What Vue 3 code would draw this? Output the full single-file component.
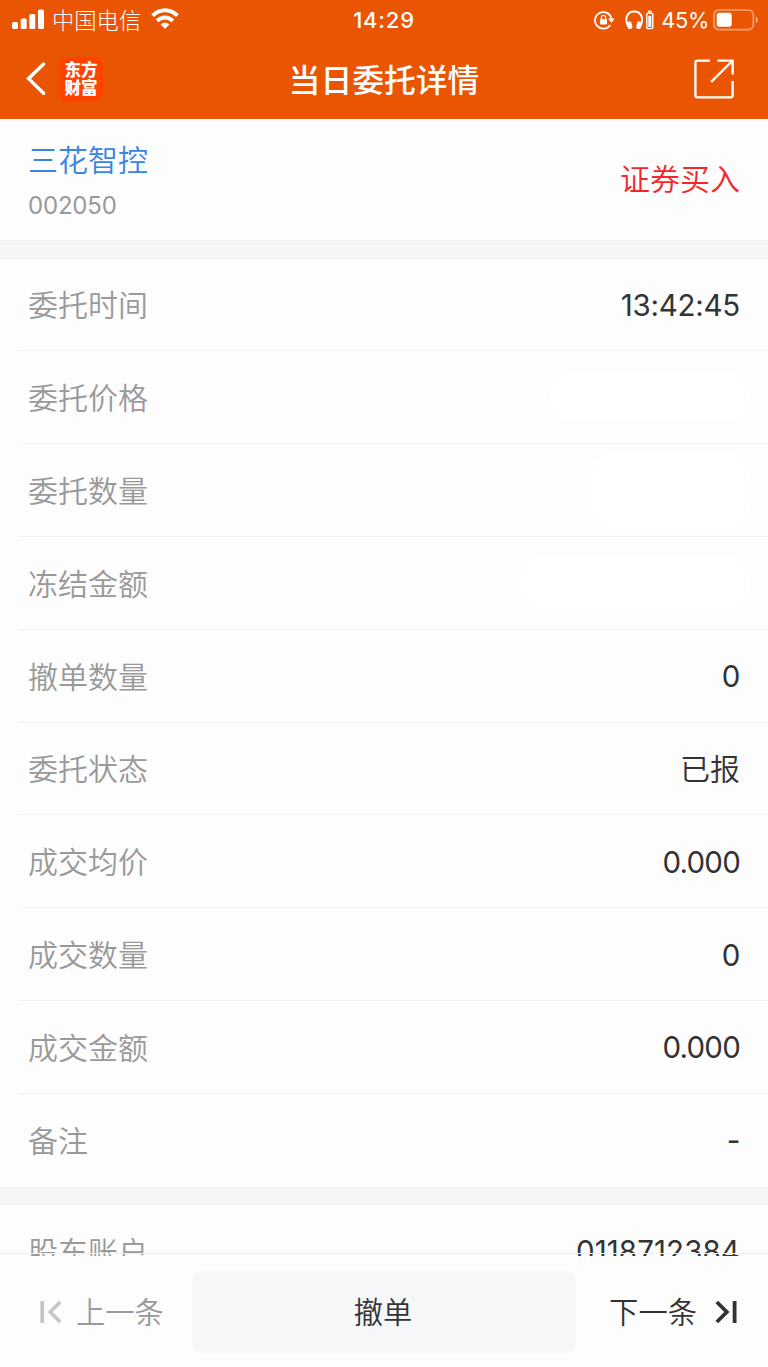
<script setup>
import { ref } from 'vue'

const stock = { name: '三花智控', code: '002050', side: '证券买入' }

const rows = ref([
  { label: '委托时间', value: '13:42:45' },
  { label: '委托价格', hidden: 'price' },
  { label: '委托数量', hidden: 'count' },
  { label: '冻结金额', hidden: 'amount' },
  { label: '撤单数量', value: '0' },
  { label: '委托状态', value: '已报', cjk: true },
  { label: '成交均价', value: '0.000', tight: true },
  { label: '成交数量', value: '0' },
  { label: '成交金额', value: '0.000', tight: true },
  { label: '备注', value: '-' }
])
</script>

<template>
  <div class="page">
    <header class="header">
      <div class="status">
        <div class="status-left">
          <svg class="signal" width="32" height="20" viewBox="0 0 32 20" fill="#fff">
            <rect x="0" y="13" width="6" height="7" rx="1.6" />
            <rect x="8.7" y="9.5" width="6" height="10.5" rx="1.6" />
            <rect x="17.3" y="5" width="6" height="15" rx="1.6" />
            <rect x="26" y="0.5" width="6" height="19.5" rx="1.6" />
          </svg>
          <span class="carrier">中国电信</span>
          <svg class="wifi" width="28" height="21" viewBox="0 0 28 21" fill="none" stroke="#fff" stroke-width="3.9">
            <path d="M1.6 7.6 C8.5 0.4 19.5 0.4 26.4 7.6" />
            <path d="M6.1 12.8 C10.6 8.4 17.4 8.4 21.9 12.8" />
            <path d="M14 20.8 L9.6 16.5 C12 14 16 14 18.4 16.5 Z" fill="#fff" stroke="none" />
          </svg>
        </div>
        <span class="clock">14:29</span>
        <div class="status-right">
          <svg class="lock" width="21" height="20" viewBox="0 0 21 20" fill="none" stroke="#fff">
            <path d="M16.2 15 A8.3 8.3 0 1 1 17.4 8.6" stroke-width="1.8" />
            <path d="M14 8.4 H20.8 L17.4 12.8 Z" fill="#fff" stroke="none" />
            <rect x="6" y="9" width="7" height="5.6" rx="0.8" fill="#fff" stroke="none" />
            <path d="M7.4 9.5 V7.4 A2.1 2.1 0 0 1 11.6 7.4 V9.5" stroke-width="1.3" />
          </svg>
          <svg class="phones" width="29" height="20" viewBox="0 0 29 20" fill="none" stroke="#fff">
            <path d="M3.2 16.5 C-0.8 9 2 1.6 9.2 1.6 C16.4 1.6 19.2 9 15.2 16.5" stroke-width="2" />
            <rect x="2.3" y="11.5" width="4.6" height="7.5" rx="1.8" fill="#fff" stroke="none" transform="rotate(-14 4.4 15)" />
            <rect x="11.7" y="11.5" width="4.6" height="7.5" rx="1.8" fill="#fff" stroke="none" transform="rotate(14 14 15)" />
            <rect x="21.8" y="3.2" width="6" height="15.4" rx="1" stroke-width="1.4" />
            <rect x="23.3" y="5.8" width="3" height="11.2" fill="#fff" stroke="none" />
            <rect x="23.2" y="0.6" width="3.2" height="2" fill="#fff" stroke="none" />
          </svg>
          <span class="percent">45%</span>
          <svg class="battery" width="46" height="22" viewBox="0 0 46 22" fill="none">
            <rect x="1" y="1" width="39.4" height="19.6" rx="5" stroke="#fff" stroke-opacity="0.45" stroke-width="1.7" />
            <rect x="3.7" y="3.8" width="15" height="14" rx="2.5" fill="#fff" />
            <path d="M42.8 7.4 C45.6 8.6 45.6 13 42.8 14.2 Z" fill="#fff" fill-opacity="0.5" />
          </svg>
        </div>
      </div>
      <div class="nav">
        <div class="nav-left">
          <svg width="20" height="34" viewBox="0 0 20 34" fill="none" stroke="#fff" stroke-width="3.4">
            <path d="M17.6 2 L2.6 16.6 L17.6 31.2" stroke-linecap="round" />
          </svg>
          <div class="logo">东方<br>财富</div>
        </div>
        <h1>当日委托详情</h1>
        <svg class="share" width="40" height="40" viewBox="0 0 40 40" fill="none" stroke="#fff" stroke-width="2.4">
          <path d="M16 1.6 H3.6 Q1.4 1.6 1.4 3.8 V36 Q1.4 38.4 3.6 38.4 H36.4 Q38.6 38.4 38.6 36 V22" />
          <path d="M23.5 1.6 H38.6 V15.4" />
          <path d="M38.2 2 L17.2 22.8" />
        </svg>
      </div>
    </header>

    <section class="stock">
      <div>
        <div class="stock-name">{{ stock.name }}</div>
        <div class="stock-code">{{ stock.code }}</div>
      </div>
      <div class="side">{{ stock.side }}</div>
    </section>

    <div class="gap"></div>

    <section class="list">
      <div v-for="row in rows" :key="row.label" class="row">
        <span class="label">{{ row.label }}</span>
        <span v-if="row.hidden" class="mask" :class="row.hidden"></span>
        <span v-else class="value" :class="{ cjk: row.cjk, tight: row.tight }">{{ row.value }}</span>
      </div>
    </section>

    <div class="gap"></div>

    <section class="list">
      <div class="row">
        <span class="label">股东账户</span>
        <span class="value account">0118712384</span>
      </div>
    </section>

    <footer class="footer">
      <button class="step prev">
        <svg width="22" height="24" viewBox="0 0 22 24" fill="none" stroke="#c4c4c4">
          <path d="M2.2 1 V23" stroke-width="3.8" />
          <path d="M20.2 2 L10.2 12 L20.2 22" stroke-width="3.4" />
        </svg>
        <span>上一条</span>
      </button>
      <button class="cancel"><span>撤单</span></button>
      <button class="step next">
        <span>下一条</span>
        <svg width="22" height="24" viewBox="0 0 22 24" fill="none" stroke="#333">
          <path d="M1.8 2 L11.8 12 L1.8 22" stroke-width="3.8" />
          <path d="M19.6 1 V23" stroke-width="3.8" />
        </svg>
      </button>
    </footer>
  </div>
</template>

<style>
body {
  margin: 0;
}
</style>

<style scoped>
.page {
  position: relative;
  width: 768px;
  height: 1367px;
  overflow: hidden;
  background: #fdfdfd;
  font-family: Inter, "Noto Sans CJK SC", sans-serif;
  color: #333;
}

.header {
  height: 119px;
  background: #ea5504;
  color: #fff;
}

.status {
  height: 39px;
  display: grid;
  grid-template-columns: 1fr auto 1fr;
  align-items: center;
}

.status-left,
.status-right {
  display: flex;
  align-items: center;
}

.status-left { padding-left: 12px; }
.status-right { justify-content: flex-end; padding-right: 9px; }

.signal { margin-top: -2px; }

.carrier {
  margin-left: 8px;
  padding-bottom: 2px;
  font: 300 22.3px/30px "Noto Sans CJK SC", sans-serif;
}

.wifi { margin-left: 10px; margin-top: -2px; }

.clock {
  font-size: 22px;
  font-weight: 500;
  letter-spacing: 0.8px;
}

.phones { margin-left: 10px; }

.percent {
  margin-left: 7px;
  font-size: 21.8px;
  letter-spacing: -0.3px;
}

.battery { margin-left: 4px; }

.nav {
  height: 80px;
  display: grid;
  grid-template-columns: 1fr auto 1fr;
  align-items: center;
}

.nav-left {
  display: flex;
  align-items: center;
  padding-left: 26px;
}

.logo {
  width: 44px;
  height: 44px;
  box-sizing: border-box;
  margin-left: 13px;
  padding-top: 3px;
  border-radius: 8px;
  background: #ff4200;
  text-align: center;
  font: 900 16.5px/18px "Noto Sans CJK SC", sans-serif;
}

h1 {
  margin: 0;
  padding-bottom: 3px;
  font: 500 31.8px/44px "Noto Sans CJK SC", sans-serif;
}

.share {
  justify-self: end;
  margin-right: 34px;
}

.stock {
  height: 121px;
  box-sizing: border-box;
  padding: 0 28px;
  display: flex;
  justify-content: space-between;
  align-items: center;
}

.stock-name {
  font: 350 30px/44px "Noto Sans CJK SC", sans-serif;
  color: #3a84e4;
}

.stock-code {
  margin-top: 9px;
  font-size: 24px;
  line-height: 34px;
  letter-spacing: -0.2px;
  color: #999;
}

.side {
  padding-bottom: 5px;
  font: 350 30px/44px "Noto Sans CJK SC", sans-serif;
  color: #f4252b;
}

.gap {
  box-sizing: border-box;
  height: 18.6px;
  background: #f5f6f8;
  border-top: 1px solid #eeeff1;
  border-bottom: 1px solid #eeeff1;
}

.row {
  height: 92.8px;
  box-sizing: border-box;
  margin-left: 19px;
  padding: 0 28px 0 9px;
  border-bottom: 1px solid #f3f3f3;
  display: flex;
  justify-content: space-between;
  align-items: center;
}

.row:last-child { border-bottom-color: transparent; }

.label {
  padding-bottom: 2px;
  font: 350 30px/44px "Noto Sans CJK SC", sans-serif;
  color: #999;
}

.value {
  padding-top: 1px;
  font-size: 29.5px;
  letter-spacing: -0.25px;
}

.value.tight { letter-spacing: -0.8px; }
.value.account { letter-spacing: 0.1px; padding: 0 0 1px; }

.value.cjk {
  padding: 0 0 2px;
  font: 350 30px/44px "Noto Sans CJK SC", sans-serif;
  letter-spacing: 0;
}

.mask {
  background: #fff;
  border-radius: 24px;
  margin-right: -10px;
}

.price { width: 200px; height: 48px; }
.count { width: 158px; height: 76px; }
.amount { width: 230px; height: 52px; }

.footer {
  position: absolute;
  left: 0;
  right: 0;
  bottom: 0;
  height: 111px;
  box-sizing: border-box;
  background: #fdfdfd;
  display: flex;
  align-items: center;
}

.footer::before {
  content: "";
  position: absolute;
  top: -3px;
  left: 0;
  right: 0;
  height: 1px;
  background: #f0f0f0;
}

button {
  border: none;
  padding: 0;
  background: none;
  color: #333;
  font: 350 29.3px/44px "Noto Sans CJK SC", sans-serif;
}

button span {
  padding-bottom: 4px;
}

.step {
  width: 192px;
  display: flex;
  align-items: center;
}

.prev {
  color: #999;
  padding-left: 40px;
  gap: 14px;
}

.next {
  justify-content: flex-end;
  padding-right: 31px;
  gap: 18px;
}

.cancel {
  flex: 1;
  height: 82px;
  padding-right: 2px;
  border-radius: 9px;
  background: #f6f7f9;
}

.cancel span { display: inline-block; }
</style>
